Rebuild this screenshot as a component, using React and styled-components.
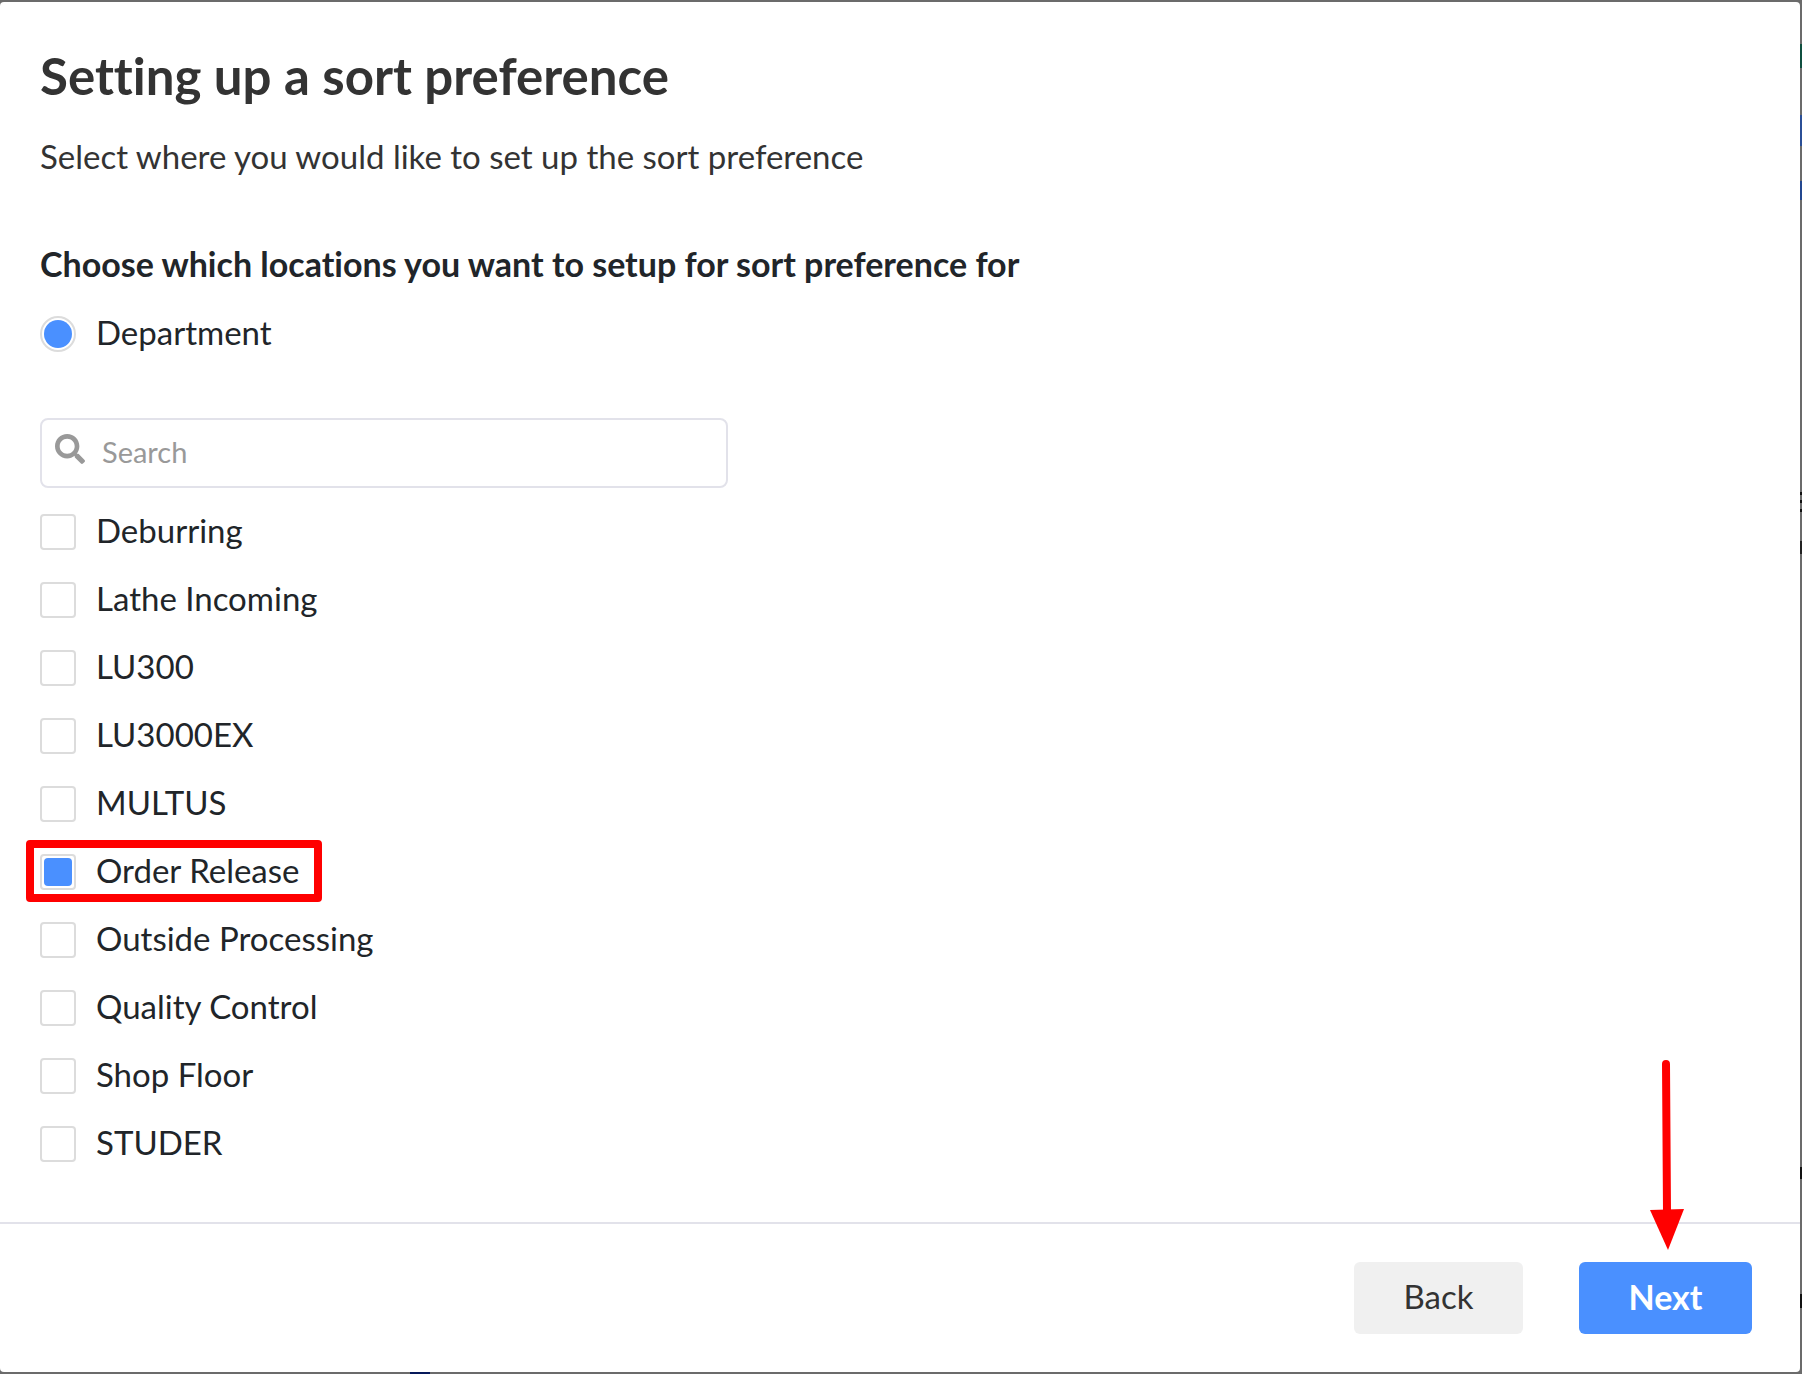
import { useState } from "react";
import styled, { createGlobalStyle, css } from "styled-components";
import { FaSearch } from "react-icons/fa";

const GlobalStyle = createGlobalStyle`
  * {
    box-sizing: border-box;
  }
  body {
    margin: 0;
    font-family: Avenir, Lato, "Open Sans", sans-serif;
    font-variant-ligatures: none;
    color: #212529;
  }
`;

const Backdrop = styled.div`
  position: relative;
  display: flex;
  min-height: 100vh;
  padding: 2px 2px 2px 0;
  background: #6b6b6b;
`;

// parts of the dimmed page that show past the edge of the modal
const Behind = styled.span`
  position: absolute;
  top: ${({ $top }) => $top}px;
  right: 0;
  width: 2px;
  height: ${({ $height }) => $height}px;
  background: ${({ $color }) => $color};
`;

const BehindBottom = styled.span`
  position: absolute;
  bottom: 0;
  left: 410px;
  width: 20px;
  height: 2px;
  background: #06195a;
`;

const Modal = styled.main`
  position: relative;
  display: flex;
  flex: 1;
  flex-direction: column;
  border-radius: 4px;
  background: #fff;
`;

const Content = styled.section`
  flex: 1;
  padding: 42px 40px 60px;
`;

const Title = styled.h1`
  margin: 0;
  color: #333;
  font-size: 51px;
  font-weight: 700;
  line-height: 64px;
`;

const Desc = styled.p`
  margin: 24px 0 0;
  color: #333;
  font-size: 33px;
  line-height: 48px;
`;

const LocationGroup = styled.fieldset`
  margin: 60px 0 0;
  padding: 0;
  border: 0;
`;

const Legend = styled.legend`
  padding: 0;
  font-size: 34px;
  font-weight: 700;
  line-height: 48px;
`;

const Option = styled.label`
  position: relative;
  display: flex;
  align-items: center;
  gap: 20px;
  width: fit-content;
  height: 36px;
  font-size: 33px;
  line-height: 36px;
`;

const OptionText = styled.span`
  padding-bottom: 4px;
`;

const control = css`
  appearance: none;
  display: grid;
  flex: none;
  place-items: center;
  width: 36px;
  height: 36px;
  margin: 0;
  border: 2px solid #dcdcdc;
  background: #fff;

  &:checked::before {
    content: "";
    width: 28px;
    height: 28px;
    border-radius: inherit;
    background: #4a90ff;
  }
`;

const Radio = styled.input.attrs({ type: "radio" })`
  ${control}
  border-radius: 50%;
`;

const Checkbox = styled.input.attrs({ type: "checkbox" })`
  ${control}
  border-radius: 4px;
`;

const RadioRow = styled.div`
  padding: 28px 0 66px;
`;

const SearchBox = styled.div`
  display: flex;
  gap: 17px;
  width: 688px;
  max-width: 100%;
  height: 70px;
  padding: 0 13px;
  border: 2px solid #e2e2ea;
  border-radius: 8px;
`;

const SearchIcon = styled(FaSearch)`
  flex: none;
  width: 30px;
  height: 30px;
  margin-top: 14px;
  color: #999;
`;

const SearchInput = styled.input`
  flex: 1;
  min-width: 0;
  padding: 0 0 4px;
  border: 0;
  outline: 0;
  background: none;
  font-family: inherit;
  font-size: 29px;

  &::placeholder {
    color: #999;
    opacity: 1;
  }
`;

const List = styled.ul`
  display: flex;
  flex-direction: column;
  gap: 32px;
  margin: 26px 0 0;
  padding: 0;
  list-style: none;
`;

const Highlight = styled.span`
  position: absolute;
  inset: -14px -23px -12px -14px;
  border: 8px solid #f00;
  border-radius: 4px;
  pointer-events: none;
`;

const Footer = styled.footer`
  display: flex;
  justify-content: flex-end;
  gap: 56px;
  padding: 38px 48px;
  border-top: 2px solid #e2e2ea;
`;

const Button = styled.button`
  min-width: ${({ $primary }) => ($primary ? 173 : 169)}px;
  height: 72px;
  padding: 0 48px 4px;
  border: 0;
  border-radius: 6px;
  background: ${({ $primary }) => ($primary ? "#4a90ff" : "#f0f0f0")};
  color: ${({ $primary }) => ($primary ? "#fff" : "#333")};
  font-family: inherit;
  font-size: ${({ $primary }) => ($primary ? 34 : 33)}px;
  font-weight: ${({ $primary }) => ($primary ? 700 : 400)};
`;

const NextWrap = styled.div`
  position: relative;
`;

const Arrow = styled.svg`
  position: absolute;
  bottom: calc(100% + 12px);
  left: 71px;
  width: 34px;
  height: 190px;
  pointer-events: none;
`;

const departments = [
  "Deburring",
  "Lathe Incoming",
  "LU300",
  "LU3000EX",
  "MULTUS",
  "Order Release",
  "Outside Processing",
  "Quality Control",
  "Shop Floor",
  "STUDER",
];

const behind = [
  { top: 44, height: 24, color: "#0f4f3f" },
  { top: 115, height: 31, color: "#2b4f96" },
  { top: 181, height: 19, color: "#23478f" },
  { top: 492, height: 3, color: "#111" },
  { top: 500, height: 3, color: "#111" },
  { top: 509, height: 3, color: "#111" },
  { top: 541, height: 13, color: "#222" },
  { top: 1167, height: 12, color: "#111" },
  { top: 1294, height: 14, color: "#111" },
];

export default function App() {
  const [selected, setSelected] = useState(["Order Release"]);
  const [search, setSearch] = useState("");

  const toggle = (name) =>
    setSelected((prev) =>
      prev.includes(name) ? prev.filter((item) => item !== name) : [...prev, name]
    );

  return (
    <Backdrop>
      <GlobalStyle />
      {behind.map(({ top, height, color }) => (
        <Behind key={top} $top={top} $height={height} $color={color} />
      ))}
      <BehindBottom />
      <Modal>
        <Content>
          <Title>Setting up a sort preference</Title>
          <Desc>Select where you would like to set up the sort preference</Desc>
          <LocationGroup>
            <Legend>Choose which locations you want to setup for sort preference for</Legend>
            <RadioRow>
              <Option>
                <Radio name="location" defaultChecked />
                <OptionText>Department</OptionText>
              </Option>
            </RadioRow>
            <SearchBox>
              <SearchIcon />
              <SearchInput
                type="text"
                aria-label="Search"
                placeholder="Search"
                value={search}
                onChange={(e) => setSearch(e.target.value)}
              />
            </SearchBox>
            <List>
              {departments
                .filter((name) => name.toLowerCase().includes(search.toLowerCase()))
                .map((name) => (
                  <li key={name}>
                    <Option>
                      <Checkbox
                        checked={selected.includes(name)}
                        onChange={() => toggle(name)}
                      />
                      <OptionText>{name}</OptionText>
                      {name === "Order Release" && <Highlight />}
                    </Option>
                  </li>
                ))}
            </List>
          </LocationGroup>
        </Content>
        <Footer>
          <Button type="button">Back</Button>
          <NextWrap>
            <Button type="button" $primary>
              Next
            </Button>
            <Arrow viewBox="0 0 34 190" aria-hidden="true">
              <path d="M16 4 17 152" stroke="#f00" strokeWidth="8" strokeLinecap="round" />
              <path d="M0 150 34 149 18 190Z" fill="#f00" />
            </Arrow>
          </NextWrap>
        </Footer>
      </Modal>
    </Backdrop>
  );
}
